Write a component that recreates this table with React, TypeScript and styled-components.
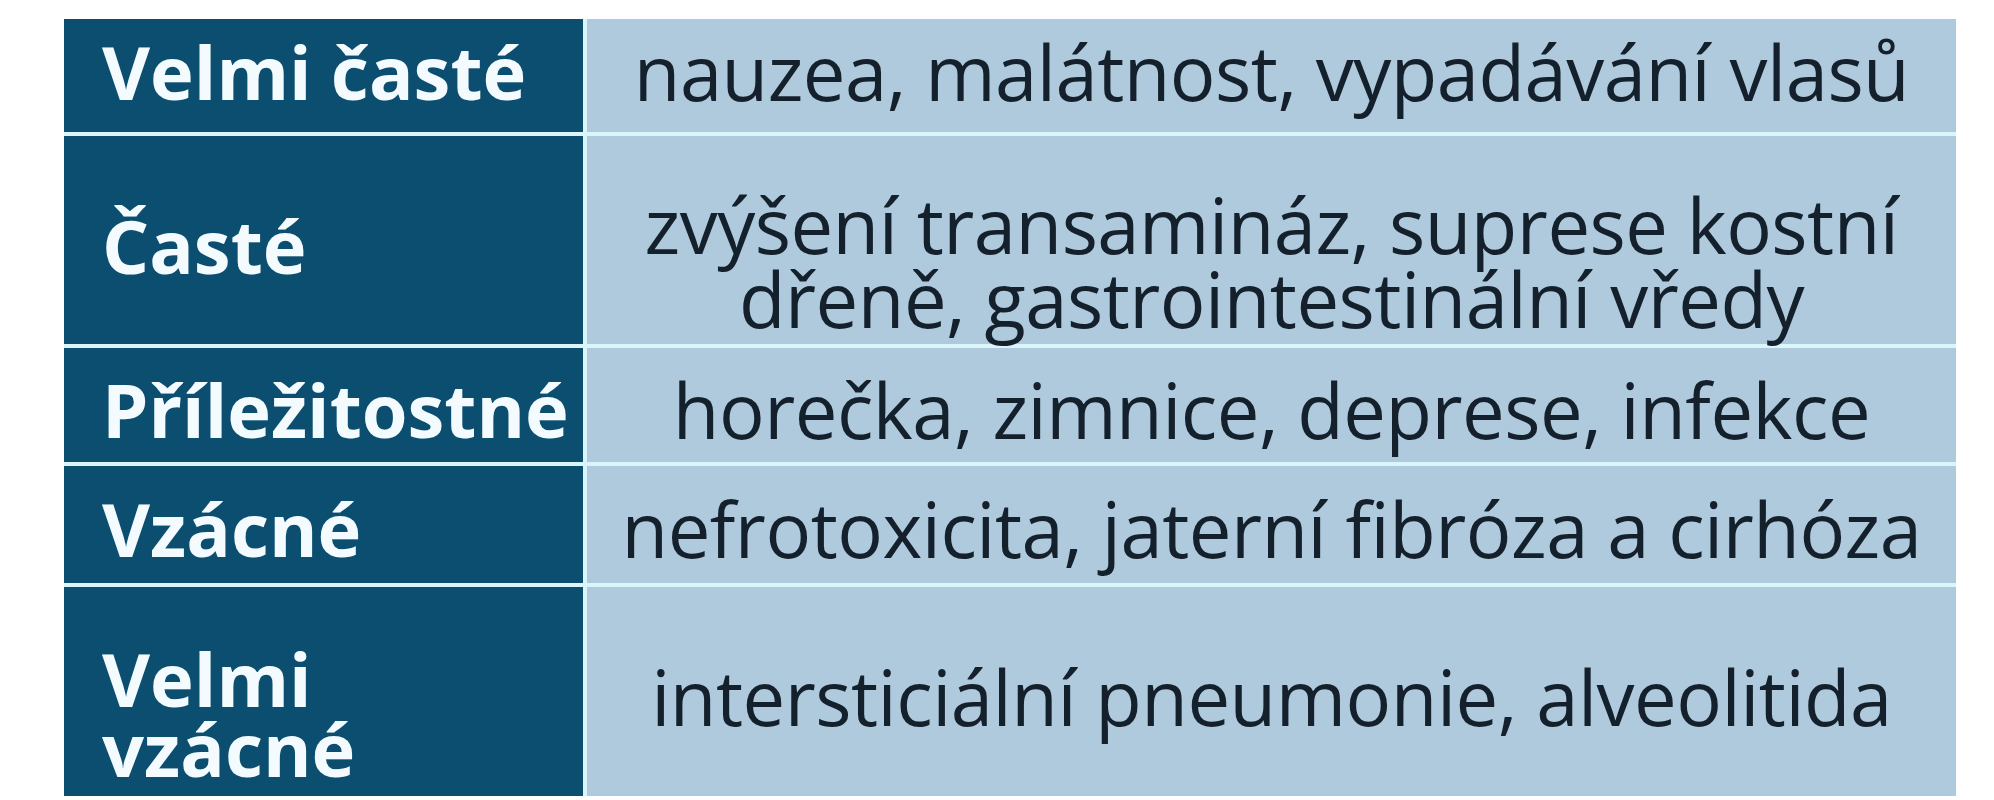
import { Fragment } from 'react'
import styled, { css, createGlobalStyle } from 'styled-components'

const Global = createGlobalStyle`
  html, body {
    margin: 0;
    background: #ffffff;
  }
  body {
    font-family: "Open Sans", "Noto Sans", sans-serif;
  }
`

const Page = styled.div`
  padding: 19px 0 0 64px;
`

const Table = styled.div`
  display: grid;
  grid-template-columns: 519px 1369px;
  grid-template-rows: 113px 208px 114px 117px 209px;
  gap: 4px;
  background: #dcf5fb;
  width: 1892px;
`

// positive shift pushes the text down, negative pulls it up
const shift = (n: number) =>
  n >= 0
    ? css`padding-top: ${n}px;`
    : css`padding-bottom: ${-n}px;`

const Head = styled.div<{ $shift: number }>`
  background: #0b4e6f;
  color: #f4fbff;
  font-weight: 700;
  font-size: 74px;
  line-height: 70px;
  padding-left: 38px;
  ${p => shift(p.$shift)}
  display: flex;
  align-items: center;
`

const Cell = styled.div<{ $shift: number }>`
  background: #afcadc;
  color: #14202c;
  font-size: 76px;
  line-height: 74px;
  letter-spacing: -0.5px;
  ${p => shift(p.$shift)}
  display: flex;
  align-items: center;
  justify-content: center;
  text-align: center;
`

const Line = styled.div`
  white-space: nowrap;
`

const rows: { head: string[]; text: string[]; hs: number; cs: number }[] = [
  { head: ['Velmi časté'], text: ['nauzea, malátnost, vypadávání vlasů'], hs: -8, cs: -8 },
  { head: ['Časté'], text: ['zvýšení transamináz, suprese kostní', 'dřeně, gastrointestinální vředy'], hs: 12, cs: 44 },
  { head: ['Příležitostné'], text: ['horečka, zimnice, deprese, infekce'], hs: 9, cs: 9 },
  { head: ['Vzácné'], text: ['nefrotoxicita, jaterní fibróza a cirhóza'], hs: 9, cs: 9 },
  { head: ['Velmi', 'vzácné'], text: ['intersticiální pneumonie, alveolitida'], hs: 44, cs: 10 },
]

const App = () => {
  return (
    <Page>
      <Global />
      <Table>
        {rows.map((row, i) => (
          <Fragment key={i}>
            <Head $shift={row.hs}>
              <div>
                {row.head.map((line, j) => (
                  <Line key={j}>{line}</Line>
                ))}
              </div>
            </Head>
            <Cell $shift={row.cs}>
              <div>
                {row.text.map((line, j) => (
                  <Line key={j}>{line}</Line>
                ))}
              </div>
            </Cell>
          </Fragment>
        ))}
      </Table>
    </Page>
  )
}

export default App
